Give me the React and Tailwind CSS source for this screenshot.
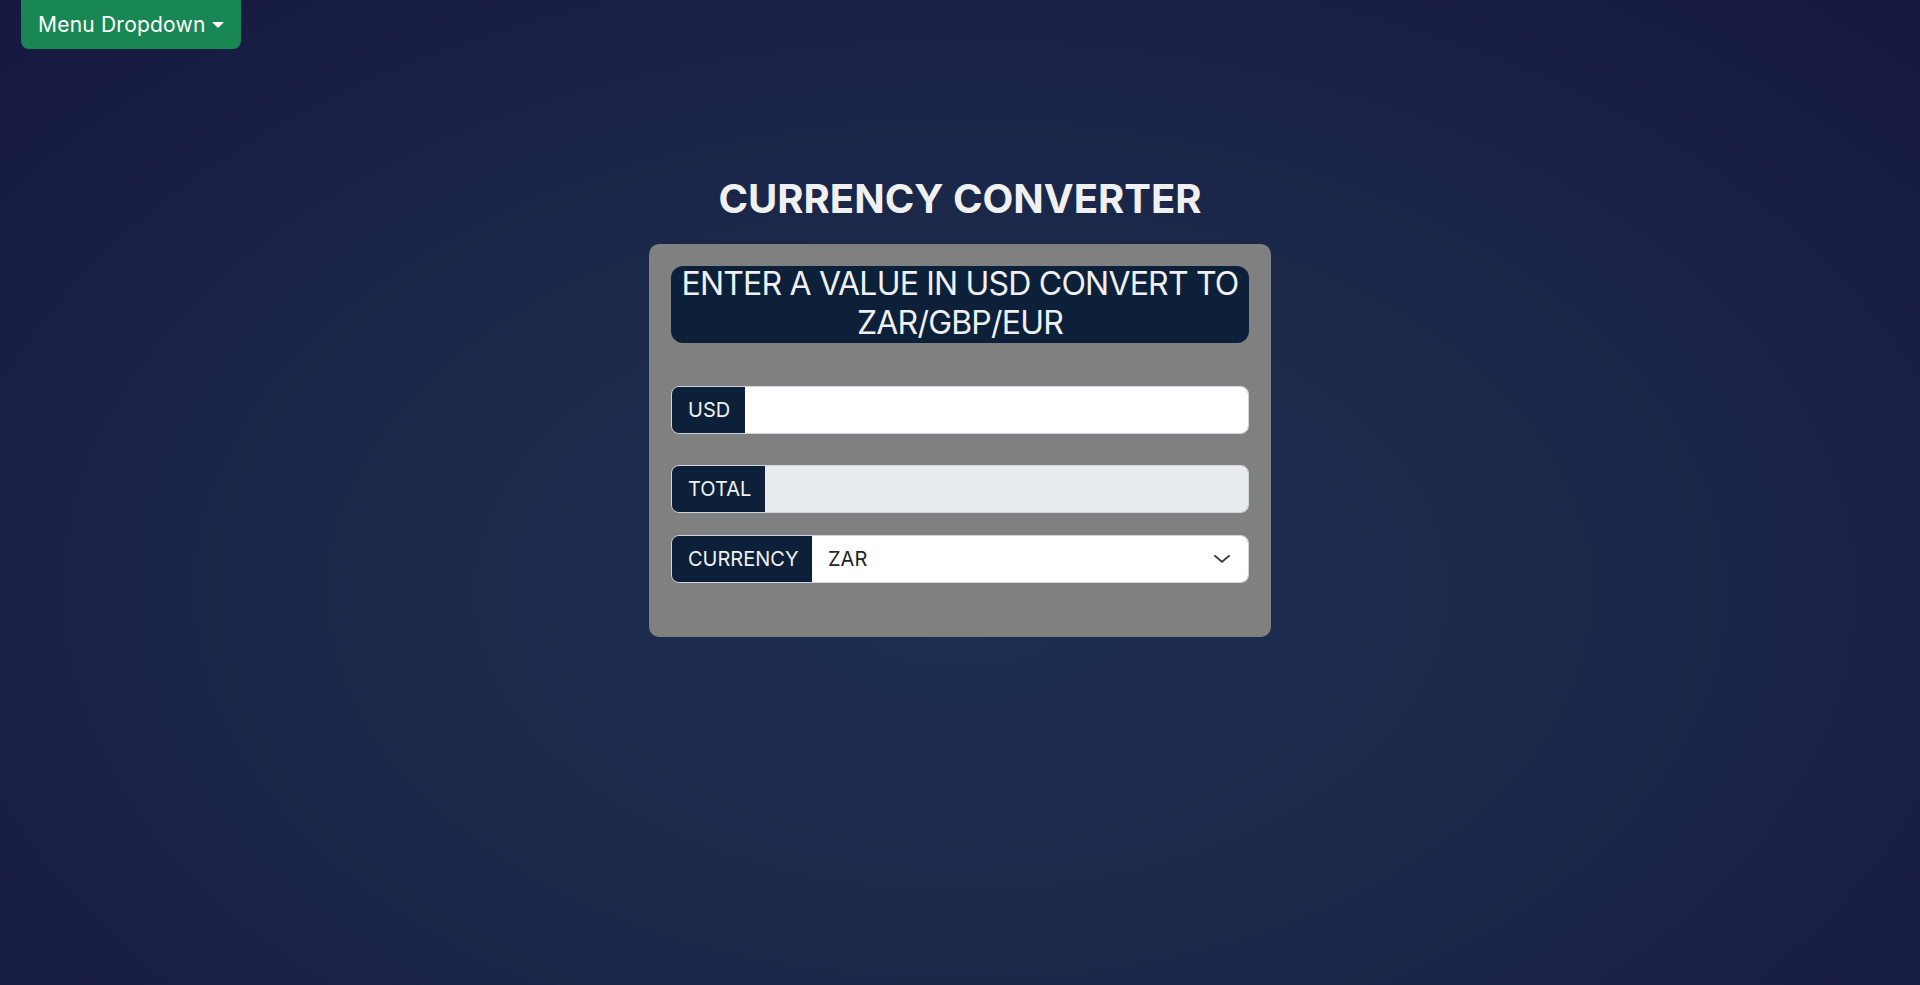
import React from "react";

export default function App() {
  return (
    <div className="min-h-screen w-full bg-[radial-gradient(ellipse_at_50%_60%,#1e2f51_0%,#1b284a_45%,#161840_100%)] font-['Inter','Open_Sans',sans-serif]">
      <div className="pl-[21px]">
        <button className="flex h-[49px] w-[220px] items-center rounded-b-lg bg-[#198754] pl-[17px] text-[21px] tracking-[0.01em] text-white">
          <span>Menu Dropdown</span>
          <span className="ml-[6px] h-0 w-0 border-x-[6px] border-t-[6px] border-x-transparent border-t-white" />
        </button>
      </div>

      <div className="flex justify-center">
        <div className="mt-[126px] flex flex-col items-center">
          <h1 className="text-[40px] font-bold leading-[48px] text-[#f0f0f0]">CURRENCY CONVERTER</h1>
          <div className="mt-[21px] w-[622px] rounded-[10px] bg-[#808080] px-[22px] pt-[22px] pb-[54px]">
            <div className="flex h-[77px] flex-col items-center justify-center rounded-xl bg-[#0c2039] pb-[4px] text-center text-[32px] font-normal leading-[39px] tracking-[-0.025em] text-[#f0f0f0]">
              <span>ENTER A VALUE IN USD CONVERT TO</span>
              <span>ZAR/GBP/EUR</span>
            </div>

            <div className="mt-[43px] flex h-[48px] overflow-hidden rounded-lg border border-[#ced4da]">
              <span className="flex w-[73px] items-center bg-[#0c2039] pl-[16px] text-[20px] text-[#f0f0f0]">USD</span>
              <input className="min-w-0 flex-1 bg-white px-4 text-[20px] outline-none" />
            </div>

            <div className="mt-[31px] flex h-[48px] overflow-hidden rounded-lg border border-[#ced4da]">
              <span className="flex w-[93px] items-center bg-[#0c2039] pl-[16px] text-[20px] text-[#f0f0f0]">TOTAL</span>
              <div className="flex-1 bg-[#e9ecef]" />
            </div>

            <div className="mt-[22px] flex h-[48px] overflow-hidden rounded-lg border border-[#ced4da]">
              <span className="flex w-[140px] items-center bg-[#0c2039] pl-[16px] text-[20px] text-[#f0f0f0]">CURRENCY</span>
              <div className="flex flex-1 items-center justify-between bg-white pl-[16px] pr-[18px] text-[20px] text-[#212529]">
                <span>ZAR</span>
                <svg width="16" height="16" viewBox="0 0 16 16" fill="none">
                  <path d="M1 5l7 7 7-7" stroke="#343a40" strokeWidth="2" strokeLinecap="round" strokeLinejoin="round" transform="translate(0 -1) scale(1 0.85) translate(0 2)" />
                </svg>
              </div>
            </div>
          </div>
        </div>
      </div>
    </div>
  );
}
